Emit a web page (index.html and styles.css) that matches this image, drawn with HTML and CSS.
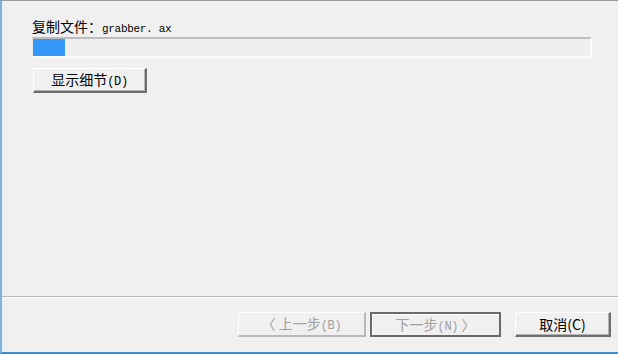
FILE: index.html
```html
<!DOCTYPE html>
<html lang="zh-CN">
<head>
    <meta charset="UTF-8">
    <title>复制文件</title>
    <link rel="stylesheet" href="styles.css">
</head>
<body>
    <div class="wizard">
        <div class="content">
            <div class="status">复制文件：<span class="latin">grabber. ax</span></div>
            <div class="progress">
                <div class="progress-fill" style="width: 32px;"></div>
            </div>
            <button class="btn btn-details">显示细节<span class="latin">(D)</span></button>
        </div>
        <div class="footer">
            <button class="btn btn-nav" disabled>〈 上一步<span class="latin">(B)</span></button>
            <button class="btn btn-nav btn-default" disabled>下一步<span class="latin">(N)</span> 〉</button>
            <button class="btn btn-cancel">取消(C)</button>
        </div>
    </div>
</body>
</html>
```

FILE: styles.css
```css
body {
    margin: 0;
    background-color: #f0f0f0;
    font-family: "Noto Sans CJK SC", "DejaVu Sans", sans-serif;
    font-size: 14px;
    color: #000;
}

.wizard {
    box-sizing: border-box;
    width: 618px;
    height: 354px;
    display: flex;
    flex-direction: column;
    border-top: 1px solid #9a9a9a;
    border-left: 2px solid #7fb3dc;
    border-bottom: 2px solid #3d8ecf;
    box-shadow: inset 1px 0 0 #e4eef7;
}

.content {
    flex: 1;
    padding: 16px 26px 0 30px;
}

.status {
    height: 18px;
    line-height: 18px;
    font-size: 14px;
}

.latin {
    font-family: "Liberation Mono", "DejaVu Sans Mono", monospace;
    font-size: 11px;
    letter-spacing: -0.3px;
}

.progress {
    box-sizing: border-box;
    height: 21px;
    margin-top: 2px;
    border-top: 2px solid #bcbcbc;
    border-left: 1px solid #e8e8e8;
    border-right: 2px solid #fbfbfb;
    border-bottom: 2px solid #fbfbfb;
    background-color: #efefef;
}

.progress-fill {
    height: 100%;
    background-color: #3597f8;
}

.btn {
    box-sizing: border-box;
    height: 25px;
    padding: 0;
    font-family: "Noto Sans CJK SC", "DejaVu Sans", sans-serif;
    font-size: 14px;
    line-height: 20px;
    color: #000;
    background-color: #f0f0f0;
    border-top: 1px solid #ffffff;
    border-left: 1px solid #ffffff;
    border-right: 2px solid #6e6e6e;
    border-bottom: 2px solid #6e6e6e;
    box-shadow: inset -1px -1px 0 #b4b4b4;
}

.btn .latin {
    font-size: 12px;
}

.btn-details {
    width: 114px;
    margin-top: 10px;
    margin-left: 1px;
}

.footer {
    height: 56px;
    display: flex;
    justify-content: flex-end;
    align-items: flex-start;
    padding: 15px 7px 0 0;
    box-sizing: border-box;
    border-top: 1px solid #b9b9b9;
    box-shadow: inset 0 1px 0 #ffffff;
}

.btn-nav {
    width: 128px;
    color: #a0a0a0;
    border-right-color: #b8b8b8;
    border-bottom-color: #b8b8b8;
    box-shadow: none;
}

.btn-nav + .btn-nav {
    margin-left: 4px;
    width: 131px;
}

.btn-default {
    border: 2px solid #6a6a6a;
    box-shadow: inset 1px 1px 0 #ffffff;
}

.btn-cancel {
    width: 96px;
    margin-left: 14px;
}
```
